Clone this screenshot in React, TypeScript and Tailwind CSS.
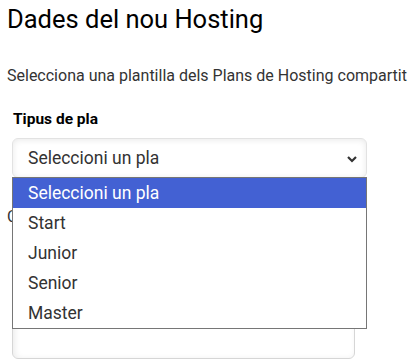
import React from 'react';

const options = ['Seleccioni un pla', 'Start', 'Junior', 'Senior', 'Master'];

export default function App() {
  return (
    <div className="relative h-[362px] w-[412px] overflow-hidden bg-white font-['Roboto',sans-serif] text-[#212529]">
      <div className="pl-[7px] pt-[4px]">
        <h2 className="text-[25.5px] leading-[30px] text-black">Dades del nou Hosting</h2>
        <p className="mt-[31px] text-[16px] leading-[22px] text-[#333]">
          Selecciona una plantilla dels Plans de Hosting compartit
        </p>
        <div className="mt-[22px] pl-[6px] text-[15.5px] font-bold leading-[20px] text-black">Tipus de pla</div>
        <div className="ml-[5px] mt-[9px] flex h-[40px] w-[355px] items-center justify-between rounded-[6px] border border-[#e2e2e2] bg-white pl-[15px] pr-[8px] shadow-[inset_0_1px_6px_rgba(0,0,0,0.09)]">
          <span className="text-[17.5px] text-[#333]">Seleccioni un pla</span>
          <svg width="12" height="8" viewBox="0 0 12 8" className="mt-[1px]">
            <path d="M2 2l4 4 4-4" fill="none" stroke="#333" strokeWidth="2.2" />
          </svg>
        </div>
        <div className="mt-[29px] text-[16px] leading-[20px] text-[#333]">Codi</div>
        <div className="ml-[5px] mt-[10px] h-[122px] w-[343px] rounded-[6px] border border-[#d6d6d6] bg-white shadow-[inset_2px_1px_6px_rgba(0,0,0,0.08)]" />
      </div>

      <div className="absolute left-[12px] top-[177px] w-[355px] border border-[#767676] bg-white">
        {options.map((o, i) => (
          <div
            key={o}
            className={`flex h-[30px] items-center pl-[15px] text-[17.5px] ${
              i === 0 ? 'bg-[#4361d3] text-white' : 'text-[#333]'
            }`}
          >
            {o}
          </div>
        ))}
      </div>
    </div>
  );
}
